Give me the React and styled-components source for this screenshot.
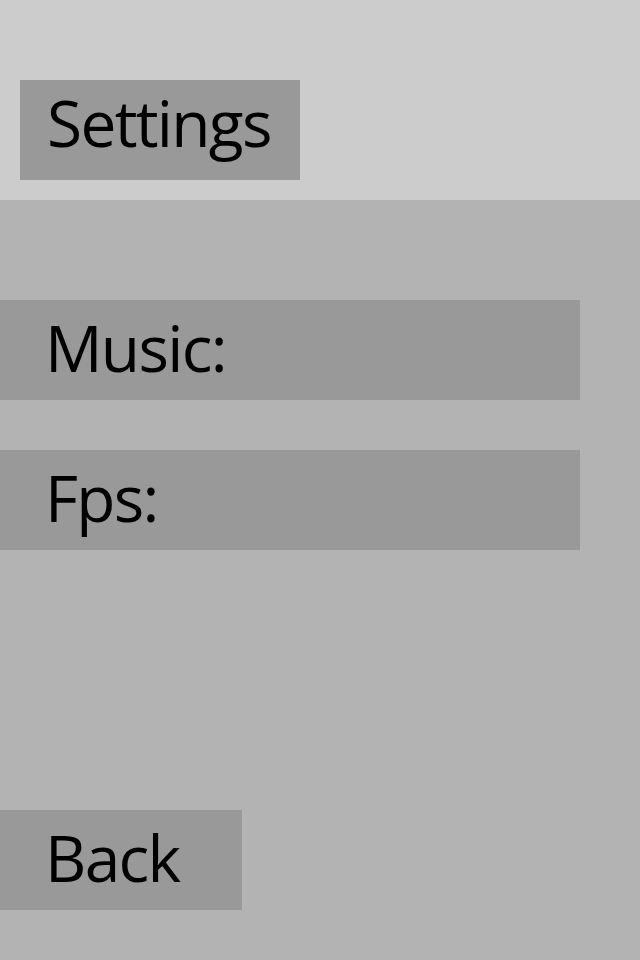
import React from "react";
import styled, { createGlobalStyle } from "styled-components";

const Global = createGlobalStyle`
  html, body { margin: 0; padding: 0; }
  body { font-family: "Open Sans", "Noto Sans", sans-serif; background: #b3b3b3; }
`;

const Screen = styled.div`
  width: 640px;
  height: 960px;
  display: flex;
  flex-direction: column;
  background: #b3b3b3;
  overflow: hidden;
`;

const Header = styled.header`
  height: 200px;
  box-sizing: border-box;
  padding: 80px 0 0 20px;
  background: #cccccc;
`;

const Title = styled.h1`
  margin: 0;
  width: 280px;
  height: 100px;
  box-sizing: border-box;
  padding: 0 0 14px 27px;
  display: flex;
  align-items: center;
  background: #999999;
  color: #000;
  font-size: 64px;
  font-weight: 400;
  letter-spacing: -1.7px;
  line-height: 1;
`;

const Body = styled.main`
  flex: 1;
  display: flex;
  flex-direction: column;
  padding-top: 100px;
`;

const Options = styled.div`
  display: flex;
  flex-direction: column;
  gap: 50px;
`;

const Row = styled.div`
  width: ${(p) => p.$width}px;
  height: 100px;
  box-sizing: border-box;
  padding: 0 0 4px 45px;
  display: flex;
  align-items: center;
  background: #999999;
  color: #000;
  font-size: 64px;
  letter-spacing: -1.7px;
  line-height: 1;
`;

const Spacer = styled.div`
  height: 260px;
`;

export default function App() {
  return (
    <Screen>
      <Global />
      <Header>
        <Title>Settings</Title>
      </Header>
      <Body>
        <Options>
          <Row $width={580}>Music:</Row>
          <Row $width={580}>Fps:</Row>
        </Options>
        <Spacer />
        <Row $width={242}>Back</Row>
      </Body>
    </Screen>
  );
}
